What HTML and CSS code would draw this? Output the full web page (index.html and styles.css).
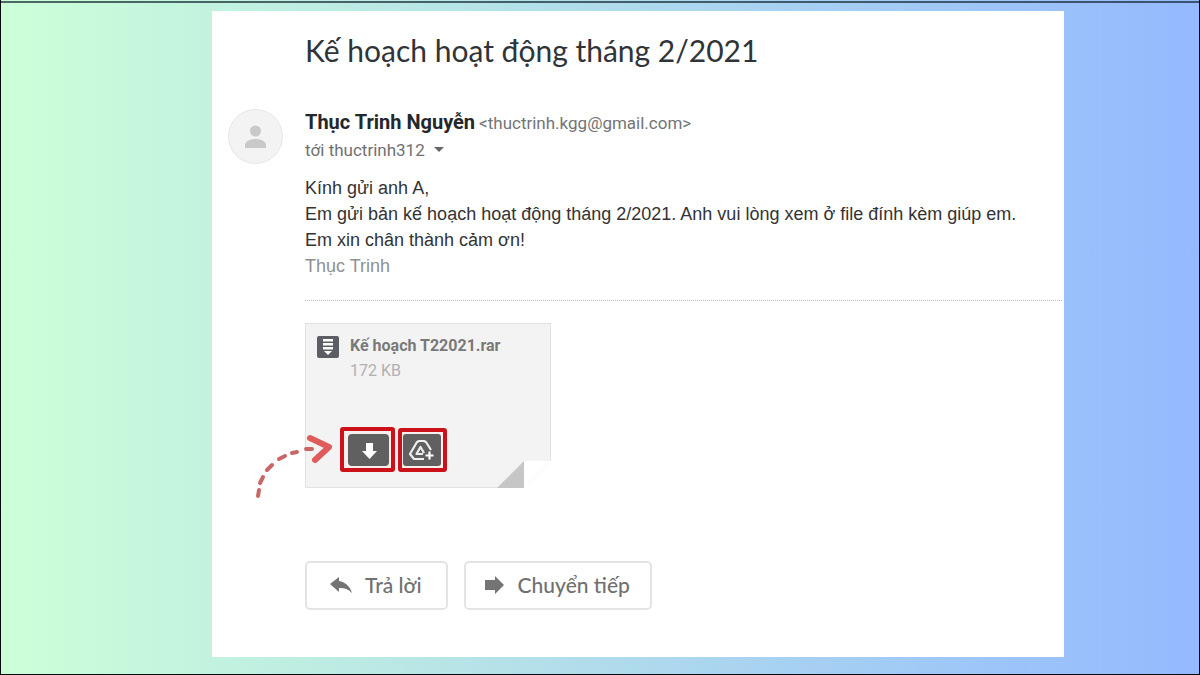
FILE: index.html
```html
<!DOCTYPE html>
<html lang="vi">
<head>
<meta charset="utf-8">
<meta name="viewport" content="width=device-width, initial-scale=1">
<title>Kế hoạch hoạt động tháng 2/2021</title>
<link rel="stylesheet" href="styles.css">
</head>
<body>
<main class="mail">
  <h1 class="subject">Kế hoạch hoạt động tháng 2/2021</h1>
  <div class="avatar">
    <svg viewBox="0 0 55 55" width="55" height="55" aria-hidden="true">
      <circle cx="27.500" cy="27.500" r="27" fill="#f3f3f3" stroke="#e6e6e6"/>
      <circle cx="27.500" cy="22" r="5.500" fill="#c9c9c9"/>
      <path d="M17 39v-3c0-4 6-6 10.500-6S38 32 38 36v3z" fill="#c9c9c9"/>
    </svg>
  </div>
  <div class="content">
    <header class="sender">
      <div class="from"><span class="name">Thục Trinh Nguyễn</span> <span class="address">&lt;thuctrinh.kgg@gmail.com&gt;</span></div>
      <button class="recipient" type="button">tới thuctrinh312
        <svg viewBox="0 0 12 6" width="12" height="6" aria-hidden="true"><path d="M1 0h10L6 5z" fill="#666"/></svg>
      </button>
    </header>
    <div class="message">
      <p>Kính gửi anh A,</p>
      <p>Em gửi bản kế hoạch hoạt động tháng 2/2021. Anh vui lòng xem ở file đính kèm giúp em.</p>
      <p>Em xin chân thành cảm ơn!</p>
      <p class="signature">Thục Trinh</p>
    </div>
    <section class="attachment" aria-label="Kế hoạch T22021.rar">
      <div class="file">
        <svg class="file-icon" viewBox="0 0 22 22" width="22" height="22" aria-hidden="true">
          <rect width="22" height="22" rx="2" fill="#5c5e66"/>
          <path d="M6 3h10v2.500H6zM6 7h10v2.500H6zM6 11h10v2.500H6zM7 15h8l-4 4z" fill="#fff"/>
        </svg>
        <div>
          <div class="file-name">Kế hoạch T22021.rar</div>
          <div class="file-size">172 KB</div>
        </div>
      </div>
      <div class="actions">
        <button class="action" type="button" aria-label="Tải xuống">
          <svg viewBox="0 0 55 45" width="55" height="45" aria-hidden="true">
            <rect x="2" y="2" width="51" height="41" rx="1" fill="#f8eeee" stroke="#cc1218" stroke-width="4"/>
            <rect x="8" y="7" width="41" height="32" rx="4" fill="#606060"/>
            <path d="M26 16h7v8h4l-7.500 8-7.500-8h4z" fill="#fff"/>
          </svg>
        </button>
        <button class="action" type="button" aria-label="Thêm vào Drive">
          <svg viewBox="0 0 50 45" width="50" height="45" aria-hidden="true">
            <rect x="2" y="3" width="45" height="40" rx="1" fill="#f8eeee" stroke="#cc1218" stroke-width="4"/>
            <rect x="5" y="7" width="38" height="32" rx="3" fill="#606060"/>
            <path d="M26 32H16l-4-5 7-12 2-1h5l2 1 5 8" fill="none" stroke="#eee" stroke-width="2.200" stroke-linejoin="round"/>
            <path d="M25 27h-6.500l4-7 3.500 6" fill="none" stroke="#eee" stroke-width="2.200" stroke-linejoin="round"/>
            <path d="M31.500 24v9M27.500 28.500h8" fill="none" stroke="#606060" stroke-width="4"/>
            <path d="M31.500 24.500v8M27.500 28.500h8" fill="none" stroke="#fff" stroke-width="2.200"/>
          </svg>
        </button>
      </div>
      <svg class="fold" viewBox="0 0 54 27" width="54" height="27" aria-hidden="true">
        <path d="M27 0h27v27H27z" fill="#fff"/>
        <path d="M0 27L27 0v27z" fill="#c6c6c6"/>
        <path d="M29 25L52 2" stroke="#f7f7f7"/>
      </svg>
      <svg class="pointer" viewBox="0 0 80 66" width="80" height="66" aria-hidden="true">
        <path d="M4 62L5 56M6 49L9 43M13 36L18 31M25 25L31 22M38 19L43 18M52 15H58" fill="none" stroke="#c96768" stroke-width="4" stroke-linecap="round"/>
        <path d="M56 4l19 9-14 13" fill="none" stroke="#e05c5c" stroke-width="6" stroke-linecap="round" stroke-linejoin="round"/>
      </svg>
    </section>
    <div class="replies">
      <button class="reply" type="button">
        <svg viewBox="0 0 22 18" width="22" height="18" aria-hidden="true"><path d="M0 8l9-7v4c6 1 11 5 13 12-4-4-7-5-13-5v4z" fill="#747474"/></svg>
        Trả lời
      </button>
      <button class="reply forward" type="button">
        <svg viewBox="0 0 20 18" width="20" height="18" aria-hidden="true"><path d="M0 4h10V0l9 9-9 9v-4H0z" fill="#747474"/></svg>
        Chuyển tiếp
      </button>
    </div>
  </div>
</main>
</body>
</html>
```
FILE: styles.css
```css
* {
  box-sizing: border-box;
}

body {
  margin: 0;
  min-height: 100vh;
  padding: 11px 135px 17px 211px;
  border: 1px solid #050a10;
  border-top: 0;
  background:
    linear-gradient(rgba(20, 40, 50, 0.7), rgba(20, 40, 50, 0.7)) 0 1px / 100% 2px no-repeat,
    linear-gradient(90deg, #ccffd8, #94b9ff);
  font-family: Roboto, "Noto Sans", sans-serif;
  color: #333;
  display: flex;
}

.mail {
  flex: 1;
  display: grid;
  grid-template-columns: 77px 1fr;
  align-content: start;
  padding: 19px 2px 46px 16px;
  background: #fff;
}

.subject {
  grid-column: 2;
  margin: 0 0 38px;
  font: 400 30px/40px Lato, "Noto Sans", sans-serif;
  color: #303438;
}

.avatar {
  margin-top: 1px;
}

.avatar svg,
.action svg {
  display: block;
}

.content {
  min-width: 0;
}

.from {
  line-height: 28px;
}

.name {
  font-size: 20px;
  font-weight: 700;
  color: #25282b;
}

.address {
  font-size: 17px;
  color: #747474;
}

button {
  font-family: inherit;
  cursor: pointer;
}

.recipient {
  display: flex;
  align-items: center;
  gap: 8px;
  padding: 0;
  border: 0;
  background: none;
  font-size: 17px;
  line-height: 24px;
  color: #707070;
}

.message {
  padding: 13px 0 21px;
  border-bottom: 1px dotted #bbb;
  font: 18px/26px "Liberation Sans", Arial, sans-serif;
}

.message p {
  margin: 0;
}

.message .signature {
  color: #909090;
}

.attachment {
  position: relative;
  display: flex;
  flex-direction: column;
  justify-content: space-between;
  width: 246px;
  min-height: 165px;
  margin: 22px 0 73px;
  padding: 9px 11px 15px;
  border: 1px solid #e2e2e2;
  background: #f3f3f3;
}

.file {
  display: flex;
  gap: 11px;
}

.file-icon {
  margin-top: 3px;
}

.file-name {
  font-size: 16px;
  font-weight: 700;
  line-height: 26px;
  color: #797979;
}

.file-size {
  font-size: 16px;
  line-height: 24px;
  color: #b0b0b0;
}

.actions {
  display: flex;
  gap: 3px;
  padding-left: 23px;
}

.action {
  padding: 0;
  border: 0;
  background: none;
}

.fold {
  position: absolute;
  right: -1px;
  bottom: -1px;
}

.pointer {
  position: absolute;
  left: -52px;
  bottom: -13px;
}

.replies {
  display: flex;
  flex-wrap: wrap;
  gap: 16px;
}

.reply {
  display: flex;
  align-items: center;
  gap: 13px;
  min-height: 49px;
  padding: 0 24px 2px 23px;
  border: 2px solid #e4e4e4;
  border-radius: 5px;
  background: #fff;
  font: 500 21px/28px Lato, "Noto Sans", sans-serif;
  color: #707070;
}

.forward {
  padding: 0 20px 2px 19px;
}
```
